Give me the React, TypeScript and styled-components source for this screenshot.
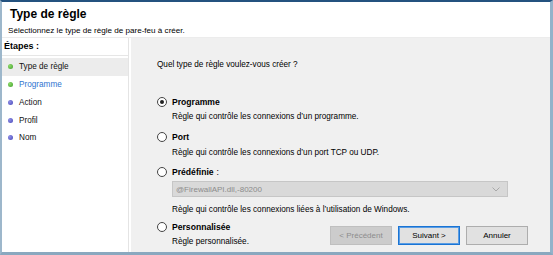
import React from "react";
import styled, { createGlobalStyle } from "styled-components";

const GlobalStyle = createGlobalStyle`
html, body {
    margin: 0;
    padding: 0;
    background: #fff;
}
body {
    font-family: "Liberation Sans", Arial, sans-serif;
    color: #000;
}
`

const steps = [
    { label: "Type de règle", done: true, active: true },
    { label: "Programme", done: true, current: true },
    { label: "Action" },
    { label: "Profil" },
    { label: "Nom" },
]

const App = () => {
    return (
        <>
            <GlobalStyle />
            <Window>
                <Header>
                    <Title>Type de règle</Title>
                    <Subtitle>Sélectionnez le type de règle de pare-feu à créer.</Subtitle>
                </Header>
                <Body>
                    <LeftPane>
                        <StepsHeader>Étapes :</StepsHeader>
                        <StepList>
                            {steps.map((s) => (
                                <Step key={s.label} $active={!!s.active} $current={!!s.current}>
                                    <Bullet $done={!!s.done} />
                                    {s.label}
                                </Step>
                            ))}
                        </StepList>
                    </LeftPane>
                    <RightPane>
                        <Question>Quel type de règle voulez-vous créer ?</Question>

                        <Option $gap={24}>
                            <OptionLabel>
                                <Radio $checked />
                                Programme
                            </OptionLabel>
                            <Desc $gap={1}>Règle qui contrôle les connexions d’un programme.</Desc>
                        </Option>

                        <Option $gap={6}>
                            <OptionLabel>
                                <Radio />
                                Port
                            </OptionLabel>
                            <Desc $gap={2}>Règle qui contrôle les connexions d’un port TCP ou UDP.</Desc>
                        </Option>

                        <Option $gap={5}>
                            <OptionLabel>
                                <Radio />
                                Prédéfinie <Colon>:</Colon>
                            </OptionLabel>
                            <Select>
                                <span>@FirewallAPI.dll,-80200</span>
                                <svg width="8" height="5" viewBox="0 0 8 5">
                                    <path d="M0.5 0.5 L4 4 L7.5 0.5" fill="none" stroke="#a8a8a8" strokeWidth="1" />
                                </svg>
                            </Select>
                            <Desc $gap={6}>Règle qui contrôle les connexions liées à l’utilisation de Windows.</Desc>
                        </Option>

                        <BottomRow>
                            <Option $gap={0}>
                                <OptionLabel>
                                    <Radio />
                                    Personnalisée
                                </OptionLabel>
                                <Desc $gap={1}>Règle personnalisée.</Desc>
                            </Option>
                            <ButtonBar>
                                <Button disabled>&lt; Précédent</Button>
                                <Button $primary>Suivant &gt;</Button>
                                <Button>Annuler</Button>
                            </ButtonBar>
                        </BottomRow>
                    </RightPane>
                </Body>
            </Window>
        </>
    )
}

const Window = styled.div`
width: 553px;
height: 255px;
box-sizing: border-box;
border-style: solid;
border-width: 2px 3px 3px 2px;
border-color: #24527f #94b2ca #8aa8bf #9db7cb;
background: #fff;
display: flex;
flex-direction: column;
overflow: hidden;
`

const Header = styled.header`
flex: none;
height: 36px;
box-sizing: border-box;
padding: 6px 0 0 6px;
border-bottom: 1px solid #ececec;
`

const Title = styled.h1`
margin: 0 0 0 2px;
font-size: 12px;
line-height: 13px;
font-weight: bold;
`

const Subtitle = styled.p`
margin: 4px 0 0;
font-size: 8.1px;
line-height: 12px;
`

const Body = styled.div`
flex: 1;
display: flex;
background: #fff;
min-height: 0;
`

const LeftPane = styled.nav`
width: 126px;
flex: none;
border-right: 1px solid #e4e4e4;
margin-right: 2px;
background: #fff;
`

const StepsHeader = styled.div`
height: 17px;
line-height: 17px;
padding-left: 2px;
font-size: 9px;
font-weight: bold;
border-bottom: 1px solid #e6e6e6;
`

const StepList = styled.ul`
list-style: none;
margin: 2px 0 0;
padding: 0;
`

const Step = styled.li<{ $active: boolean; $current: boolean }>`
height: 17.75px;
display: flex;
align-items: center;
padding-left: 6px;
font-size: 8.2px;
color: ${({ $current }) => ($current ? "#2f74d0" : "#111")};
background: ${({ $active }) => ($active ? "#ececec" : "transparent")};
`

const Bullet = styled.span<{ $done: boolean }>`
width: 5px;
height: 5px;
border-radius: 50%;
margin-right: 6px;
background: ${({ $done }) =>
    $done
        ? "radial-gradient(circle at 35% 35%, #8fdc6a, #3f9d2a)"
        : "radial-gradient(circle at 35% 35%, #8f8fe6, #4646b8)"};
`

const RightPane = styled.main`
flex: 1;
background: #f0f0f0;
padding: 21px 22px 0 26px;
display: flex;
flex-direction: column;
overflow: hidden;
`

const Question = styled.div`
font-size: 8.2px;
line-height: 12px;
`

const Option = styled.div<{ $gap: number }>`
margin-top: ${({ $gap }) => $gap}px;
`

const OptionLabel = styled.label`
height: 14px;
display: flex;
align-items: center;
font-size: 8.6px;
font-weight: bold;
`

const Colon = styled.span`
font-weight: normal;
margin-left: 3px;
`

const Radio = styled.span<{ $checked?: boolean }>`
width: 10px;
height: 10px;
box-sizing: border-box;
border: 1px solid #444;
border-radius: 50%;
background: #fff;
margin-right: 5px;
display: flex;
align-items: center;
justify-content: center;
&::after {
    content: "";
    width: 4px;
    height: 4px;
    border-radius: 50%;
    background: #222;
    display: ${({ $checked }) => ($checked ? "block" : "none")};
}
`

const Desc = styled.div<{ $gap: number }>`
margin: ${({ $gap }) => $gap}px 0 0 15px;
font-size: 8.2px;
line-height: 14px;
`

const Select = styled.div`
margin: 2px 0 0 15px;
width: 336px;
height: 16px;
box-sizing: border-box;
border: 1px solid #c6c6c6;
background: #d9d9d9;
display: flex;
align-items: center;
justify-content: space-between;
padding: 0 7px 0 3px;
font-size: 8px;
color: #8c8c8c;
`

const BottomRow = styled.div`
margin-top: 3px;
display: flex;
align-items: flex-start;
`

const ButtonBar = styled.div`
margin: 6px 0 0 auto;
display: flex;
gap: 6px;
`

const Button = styled.button<{ $primary?: boolean }>`
width: 62px;
height: 19px;
box-sizing: border-box;
padding: 0;
font-family: "Liberation Sans", Arial, sans-serif;
font-size: 8px;
color: #000;
background: #e1e1e1;
border: 1px solid ${({ $primary }) => ($primary ? "#1a74d4" : "#adadad")};
box-shadow: ${({ $primary }) => ($primary ? "inset 0 0 0 1px #5a9de4" : "none")};
&:disabled {
    color: #8d8d8d;
    background: #cccccc;
    border-color: #bfbfbf;
}
`

export default App;
